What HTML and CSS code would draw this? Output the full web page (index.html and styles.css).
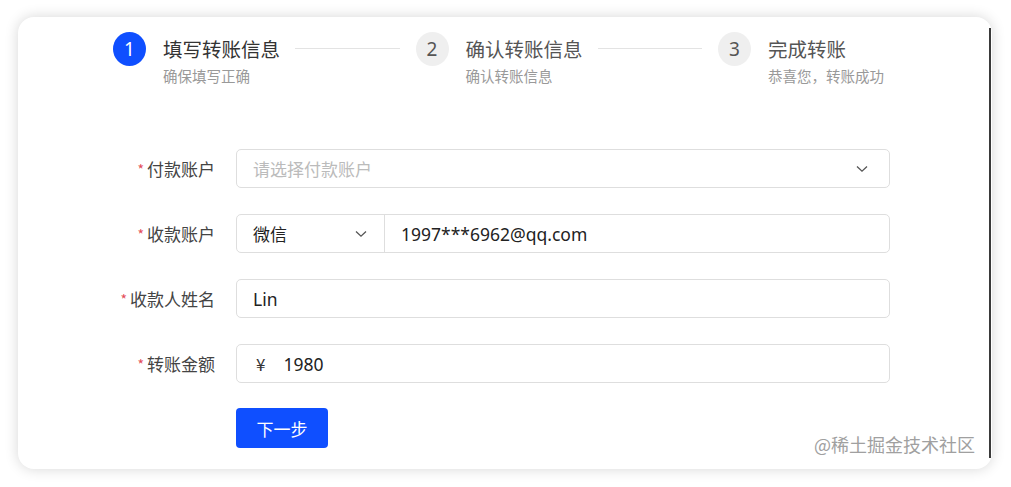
FILE: index.html
```html
<!DOCTYPE html>
<html lang="zh">
<head>
<meta charset="utf-8">
<title>转账</title>
<link rel="stylesheet" href="styles.css">
</head>
<body>
<div class="card">
  <div class="steps">
    <div class="step step-active">
      <div class="step-icon">1</div>
      <div class="step-content">
        <div class="step-title-row"><span class="step-title">填写转账信息</span><span class="step-line"></span></div>
        <div class="step-desc">确保填写正确</div>
      </div>
    </div>
    <div class="step">
      <div class="step-icon">2</div>
      <div class="step-content">
        <div class="step-title-row"><span class="step-title">确认转账信息</span><span class="step-line"></span></div>
        <div class="step-desc">确认转账信息</div>
      </div>
    </div>
    <div class="step step-last">
      <div class="step-icon">3</div>
      <div class="step-content">
        <div class="step-title-row"><span class="step-title">完成转账</span></div>
        <div class="step-desc">恭喜您，转账成功</div>
      </div>
    </div>
  </div>

  <form class="form">
    <div class="row">
      <label class="label"><span class="req">*</span>付款账户</label>
      <div class="field select">
        <span class="placeholder">请选择付款账户</span>
        <svg class="chev" viewBox="0 0 12 8" width="12" height="8"><path d="M1 1.5 L6 6.2 L11 1.5" fill="none" stroke="#555" stroke-width="1.3"/></svg>
      </div>
    </div>
    <div class="row">
      <label class="label"><span class="req">*</span>收款账户</label>
      <div class="field group">
        <div class="group-select">
          <span class="value">微信</span>
          <svg class="chev" viewBox="0 0 12 8" width="12" height="8"><path d="M1 1.5 L6 6.2 L11 1.5" fill="none" stroke="#555" stroke-width="1.3"/></svg>
        </div>
        <div class="group-input"><span class="value latin">1997***6962@qq.com</span></div>
      </div>
    </div>
    <div class="row">
      <label class="label"><span class="req">*</span>收款人姓名</label>
      <div class="field"><span class="value latin">Lin</span></div>
    </div>
    <div class="row">
      <label class="label"><span class="req">*</span>转账金额</label>
      <div class="field"><span class="yen">¥</span><span class="value latin">1980</span></div>
    </div>
    <div class="row">
      <span class="label"></span>
      <button type="button" class="btn">下一步</button>
    </div>
  </form>

  <div class="watermark">@稀土掘金技术社区</div>
</div>
</body>
</html>
```

FILE: styles.css
```css
* { box-sizing: border-box; }
html, body {
  margin: 0;
  padding: 0;
  background: #ffffff;
  font-family: "Noto Sans CJK SC", "Noto Sans", sans-serif;
}
body {
  width: 1011px;
  height: 487px;
  overflow: hidden;
  padding: 17px 19px 18px 18px;
}
.card {
  position: relative;
  width: 974px;
  height: 452px;
  background: #fff;
  border-radius: 16px;
  box-shadow: 0 0 14px rgba(0, 0, 0, 0.16);
  padding-top: 15px;
}
.card::after {
  content: "";
  position: absolute;
  right: 1px;
  top: 11px;
  bottom: 11px;
  width: 2px;
  background: #3a3a3a;
}

/* steps */
.steps {
  display: flex;
  margin-left: 95px;
  width: 775px;
}
.step {
  display: flex;
  flex: 1 1 0;
  align-items: flex-start;
}
.step-last { flex: 0 0 170px; }
.step-icon {
  width: 33px;
  height: 34px;
  border-radius: 50%;
  background: #efefef;
  color: #555;
  font-size: 19px;
  line-height: 34px;
  text-align: center;
  flex: none;
  font-family: "Noto Sans", sans-serif;
}
.step-active .step-icon {
  background: #0f4fff;
  color: #fff;
}
.step-content {
  flex: 1;
  margin-left: 17px;
}
.step-title-row {
  display: flex;
  align-items: center;
  height: 33px;
}
.step-title {
  font-size: 19.5px;
  color: #555;
  white-space: nowrap;
}
.step-active .step-title { color: #333; }
.step-line {
  flex: 1;
  height: 1px;
  background: #e3e3e3;
  margin: 0 16px 0 15px;
}
.step-desc {
  margin-top: 0;
  font-size: 14.5px;
  color: #999;
  white-space: nowrap;
}

/* form */
.form {
  margin-top: 63px;
  display: flex;
  flex-direction: column;
  gap: 26px;
}
.row {
  display: flex;
  align-items: center;
}
.label {
  width: 218px;
  padding-right: 21px;
  text-align: right;
  font-size: 17px;
  color: #444;
  flex: none;
}
.req {
  color: #e34d59;
  font-size: 14px;
  margin-right: 3px;
  position: relative;
  top: -1px;
}
.field {
  width: 654px;
  height: 39px;
  border: 1px solid #dedede;
  border-radius: 5px;
  display: flex;
  align-items: center;
  padding: 0 16px;
  font-size: 17px;
  color: #222;
}
.placeholder { color: #bbb; flex: 1; }
.select .chev { margin-right: 5px; }
.group { padding: 0; }
.group-select {
  width: 148px;
  height: 100%;
  display: flex;
  align-items: center;
  justify-content: space-between;
  padding: 0 17px 0 16px;
  border-right: 1px solid #dedede;
}
.group-input {
  flex: 1;
  padding-left: 16px;
}
.value { color: #222; }
.latin { font-family: "Noto Sans", "Noto Sans CJK SC", sans-serif; font-size: 17.5px; }
.yen {
  margin-left: 3px;
  margin-right: 18px;
  color: #333;
}
.btn {
  width: 92px;
  height: 40px;
  border: none;
  border-radius: 4px;
  background: #0f4fff;
  color: #fff;
  font-size: 17px;
  font-family: "Noto Sans CJK SC", sans-serif;
  padding: 0;
  margin-top: -1px;
}
.watermark {
  position: absolute;
  right: 17px;
  bottom: 12px;
  font-size: 18px;
  color: #a0a0a0;
}
```
